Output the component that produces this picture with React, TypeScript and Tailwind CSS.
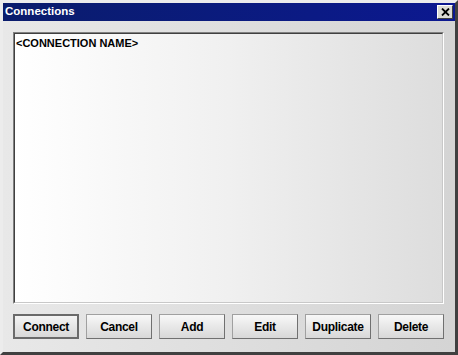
import React from "react";

const buttons = ["Connect", "Cancel", "Add", "Edit", "Duplicate", "Delete"];

export default function App() {
  return (
    <div
      className="w-[458px] h-[355px] bg-[#d8d8d8] border-t-[3px] border-l-[3px] border-t-[#ececec] border-l-[#ececec] border-r-[3px] border-b-[3px] border-r-[#404040] border-b-[#404040] flex flex-col"
      style={{ fontFamily: '"Liberation Sans", Arial, sans-serif' }}
    >
      <div className="h-[18px] bg-gradient-to-r from-[#0a1c6c] to-[#0c1890] flex items-center justify-between pl-[2px] pr-[2px]">
        <span className="text-white font-bold text-[11.5px] leading-none">Connections</span>
        <div className="w-[16px] h-[14px] bg-[#dcdcd4] border border-t-white border-l-white border-r-[#404040] border-b-[#404040] flex items-center justify-center">
          <svg width="9" height="8" viewBox="0 0 9 8">
            <path d="M1 0.5 L8 7.5 M8 0.5 L1 7.5" stroke="#000" strokeWidth="1.8" />
          </svg>
        </div>
      </div>
      <div className="flex-1 flex flex-col bg-gradient-to-r from-[#e8e8e8] via-[#dedede] to-[#d4d4d4] pl-[10px] pr-[11px] pt-[11px] pb-[10px]">
        <div className="h-[272px] border border-t-[#808080] border-l-[#808080] border-r-white border-b-white">
          <div className="h-full border border-t-[#404040] border-l-[#404040] border-r-[#c8c8c8] border-b-[#c8c8c8] bg-gradient-to-r from-white via-[#f0f0f0] to-[#dddddd] pt-[3px] pl-[1px]">
            <div className="text-[11px] font-bold text-black leading-[13px]">&lt;CONNECTION NAME&gt;</div>
          </div>
        </div>
        <div className="mt-[10px] flex gap-[7px]">
          {buttons.map((b, i) => (
            <div
              key={b}
              className={
                i === 0
                  ? "w-[66px] h-[25px] border-2 border-[#6a6a6a] bg-gradient-to-b from-[#f4f4f4] to-[#d8d8d8] flex items-center justify-center"
                  : "w-[66px] h-[25px] border border-t-[#a0a0a0] border-l-[#a0a0a0] border-r-[#707070] border-b-[#707070] bg-gradient-to-b from-[#f8f8f8] to-[#d8d8d8] flex items-center justify-center"
              }
            >
              <span className="text-[12px] font-bold text-black leading-none tracking-[-0.3px]">{b}</span>
            </div>
          ))}
        </div>
      </div>
    </div>
  );
}
